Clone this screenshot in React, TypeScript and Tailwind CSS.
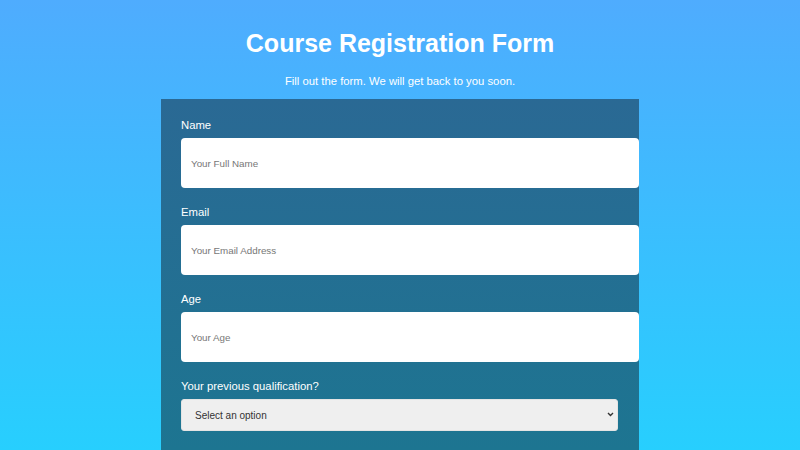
import React from "react";

function Field({ label, placeholder }: { label: string; placeholder: string }) {
  return (
    <div className="mb-[17px]">
      <label className="block text-[11.3px] leading-[14px] text-white mb-[6px]">{label}</label>
      <input
        type="text"
        placeholder={placeholder}
        className="block w-[458px] h-[50px] rounded-[4px] bg-white pl-[10px] text-[9.8px] text-[#333] placeholder:text-[#777] outline-none border-0"
      />
    </div>
  );
}

export default function App() {
  return (
    <div
      className="w-[800px] h-[450px] overflow-hidden bg-[linear-gradient(to_bottom,#4facfe,#27cffe)] flex flex-col items-center"
      style={{ fontFamily: '"Liberation Sans", Arial, sans-serif' }}
    >
      <h1 className="mt-[28px] text-[25px] leading-[30px] font-bold text-white">Course Registration Form</h1>
      <p className="mt-[17px] text-[11.3px] leading-[13px] text-white">Fill out the form. We will get back to you soon.</p>
      <div className="mt-[11px] w-[478px] flex-1 bg-[linear-gradient(to_bottom,#2a6994,#1d7591)] pt-[19px] pl-[20px]">
        <Field label="Name" placeholder="Your Full Name" />
        <Field label="Email" placeholder="Your Email Address" />
        <Field label="Age" placeholder="Your Age" />
        <div>
          <label className="block text-[11.3px] leading-[14px] text-white mb-[6px]">Your previous qualification?</label>
          <div className="relative w-[437px] h-[32px]">
            <select
              defaultValue=""
              className="appearance-none block w-full h-full rounded-[3px] bg-[#efefef] border border-[#e4e4e4] pl-[13px] text-[10px] text-[#333] outline-none"
            >
              <option value="">Select an option</option>
              <option value="hs">High School</option>
              <option value="bachelor">Bachelor</option>
              <option value="master">Master</option>
            </select>
            <svg
              className="pointer-events-none absolute right-[4px] top-[13px]"
              width="7"
              height="5"
              viewBox="0 0 7 5"
            >
              <path d="M1 1 L3.5 3.5 L6 1" stroke="#333" strokeWidth="1.4" fill="none" />
            </svg>
          </div>
        </div>
      </div>
    </div>
  );
}
